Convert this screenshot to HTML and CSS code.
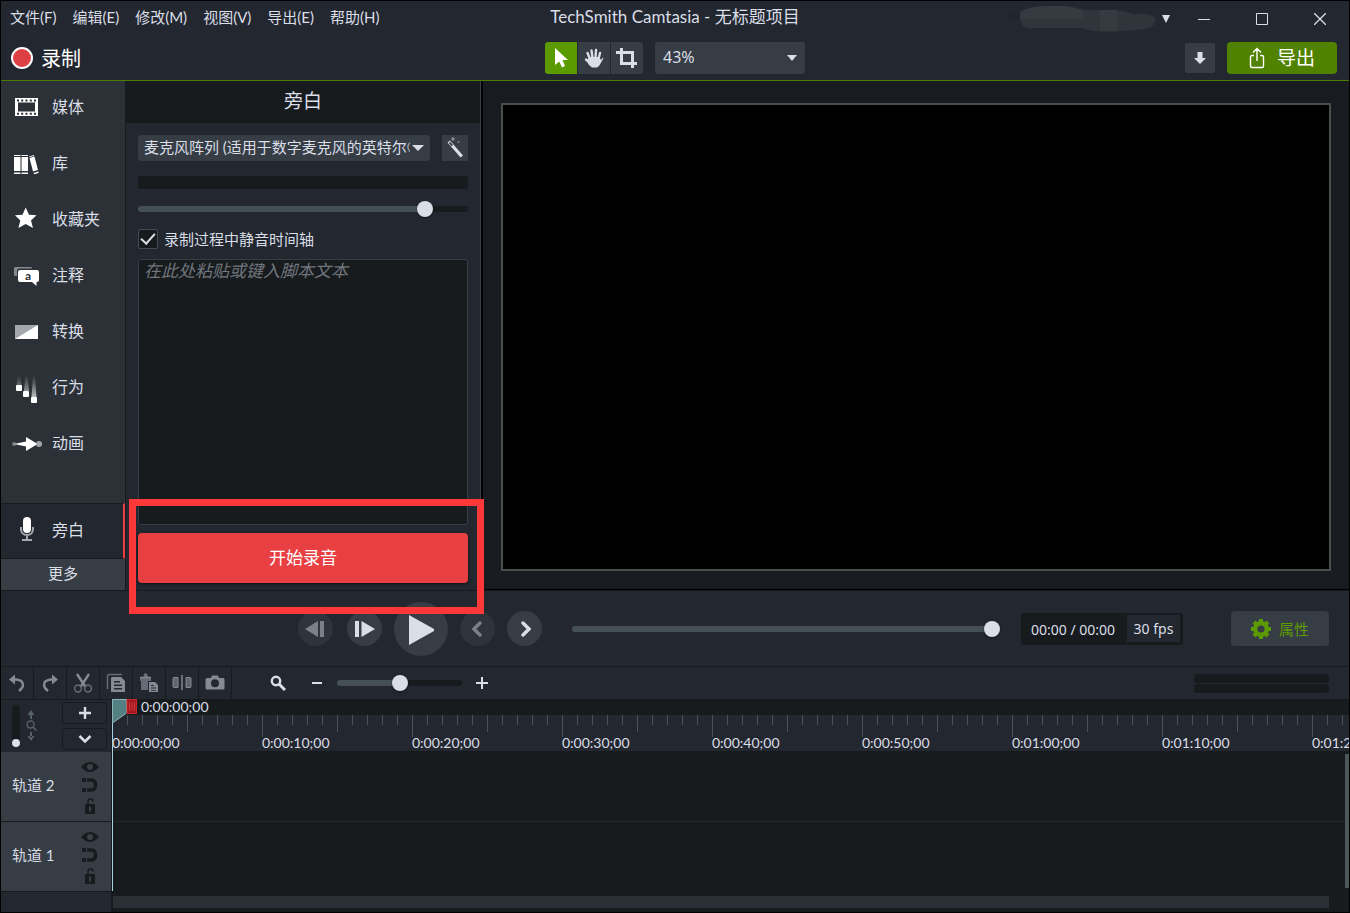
FILE: index.html
```html
<!DOCTYPE html>
<html lang="zh-CN">
<head>
    <meta charset="UTF-8">
    <meta name="viewport" content="width=device-width, initial-scale=1.0">
    <title>TechSmith Camtasia - 无标题项目</title>
    <link rel="stylesheet" href="styles.css">
</head>

<body>

<header>
  <div class="title-bar">
    <nav class="menu">
      <button>文件(F)</button>
      <button>编辑(E)</button>
      <button>修改(M)</button>
      <button>视图(V)</button>
      <button>导出(E)</button>
      <button>帮助(H)</button>
    </nav>
    <h1>TechSmith Camtasia - 无标题项目</h1>
    <div class="window-controls">
      <svg class="account" width="152" height="28" viewBox="0 0 152 28">
        <path d="M0 9Q8 6 16 7V17Q6 15 0 11z" fill="#22262c"/>
        <path d="M15 7Q25 1 42 1H60Q72 3 78 5H108Q122 6 128 9Q146 8 150 13Q152 22 138 24Q110 28 88 26L76 23H22Q15 20 15 14z" fill="#30353b"/>
        <path d="M15 7Q25 1 42 1H60Q72 3 78 5V14H15zM95 5H112V26H95z" fill="#363a41"/>
      </svg>
      <button class="account-menu" aria-label="账户"><svg width="8" height="8" viewBox="0 0 8 8"><path d="M0 0h8L4 8z" fill="#dadee7"/></svg></button>
      <button class="window-btn" aria-label="最小化"><svg width="12" height="12" viewBox="0 0 12 12"><path d="M0 6.5h12" stroke="#dadee7"/></svg></button>
      <button class="window-btn" aria-label="最大化"><svg width="12" height="12" viewBox="0 0 12 12"><path d="M.5.5h11v11H.5z" fill="none" stroke="#dadee7"/></svg></button>
      <button class="window-btn" aria-label="关闭"><svg width="12" height="12" viewBox="0 0 12 12"><path d="M0 0l12 12M12 0L0 12" stroke="#dadee7" stroke-width="1.3"/></svg></button>
    </div>
  </div>

  <div class="main-toolbar">
    <button class="record-btn"><span class="record-dot"></span>录制</button>
    <div class="canvas-tools">
      <div class="tool-group">
        <button class="tool active" aria-label="选择"><svg width="16" height="20" viewBox="0 0 16 20"><path d="M2 0L15 12H9.500L12 18L9 19.500L6.300 13.400L2 17z" fill="#fff"/></svg></button>
        <button class="tool" aria-label="平移"><svg width="20" height="20" viewBox="0 0 20 20"><path d="M6 11L3.500 5M8.500 10L7.500 2.500M11.500 10L12 2M14.500 11L16 5M6 15L2 11.500" fill="none" stroke="#dadee7" stroke-width="2.400" stroke-linecap="round"/><path d="M5 9L15.500 9L17 12L19 9.500Q20 10 18 13L15 18L13 19.500H8L5 17L3 13z" fill="#dadee7"/></svg></button>
        <button class="tool" aria-label="裁剪"><svg width="22" height="20" viewBox="0 0 22 20"><path d="M0 4.500H16.500V20M5.500 0V15.500H21" fill="none" stroke="#dadee7" stroke-width="3"/></svg></button>
      </div>
      <div class="select-wrap zoom-select">
        <select aria-label="缩放"><option>43%</option></select>
      </div>
    </div>
    <div class="share-tools">
      <button class="download-btn" aria-label="下载"><svg width="12" height="12" viewBox="0 0 12 12"><path d="M3.500 0h5v6H12L6 12L0 6h3.500z" fill="#dadee7"/></svg></button>
      <button class="export-btn"><svg width="16" height="22" viewBox="0 0 16 22"><path d="M5 8.500H3Q1.500 8.500 1.500 10V19Q1.500 20.500 3 20.500H13Q14.500 20.500 14.500 19V10Q14.500 8.500 13 8.500H11M8 14V2M4 5.500L8 1.500L12 5.500" fill="none" stroke="#fff" stroke-width="1.400"/></svg>导出</button>
    </div>
  </div>
</header>

<main>
  <aside class="sidebar">
    <div class="tabs">
      <button class="tab"><svg width="32" height="32" viewBox="0 0 32 32"><path fill-rule="evenodd" d="M4 7h23v18H4zM7 11.500h17v9H7zM6 8.500v2h2v-2zM10.200 8.500v2h2v-2zM14.500 8.500v2h2v-2zM18.800 8.500v2h2v-2zM23 8.500v2h2v-2zM6 21.800v2h2v-2zM10.200 21.800v2h2v-2zM14.500 21.800v2h2v-2zM18.800 21.800v2h2v-2zM23 21.800v2h2v-2z" fill="#fff"/></svg>媒体</button>
      <button class="tab"><svg width="32" height="32" viewBox="0 0 32 32"><path d="M3 10h6.500v14H3zM10.500 10H17v14h-6.500zM18.500 11L23.500 9.500L27 23L22 24.500zM3 8h6.500v1H3zM10.500 8H17v1h-6.500zM18 9.500L23 8V9L18.300 10.300zM3 25.500h6.500V27H3zM10.500 25.500H17V27h-6.500zM22.500 26L27.500 24.500V26L23 27.200z" fill="#fff"/></svg>库</button>
      <button class="tab"><svg width="32" height="32" viewBox="0 0 32 32"><path d="M14.700 4.500L18 11.700L25.500 12.300L20 17.600L22 25L14.700 21L7.400 25L9.300 17.600L4 12.300L11.500 11.700z" fill="#fff"/></svg>收藏夹</button>
      <button class="tab"><svg width="32" height="32" viewBox="0 0 32 32"><path d="M4.500 17Q3 17 3 15.500V9.500Q3 8 4.500 8H20Q21 8 21 9.500H8Q6 9.500 6 11.500V17z" fill="#858a90"/><path d="M9 11H26Q28 11 28 13V21Q28 23 26 23H25.500V27L21 23H9Q7 23 7 21V13Q7 11 9 11z" fill="#fff"/><text x="17" y="21" text-anchor="middle" class="bubble-letter">a</text></svg>注释</button>
      <button class="tab"><svg width="32" height="32" viewBox="0 0 32 32"><path d="M4 10h23v14H4z" fill="#a4a8ac"/><path d="M27 10V24H4z" fill="#fff"/></svg>转换</button>
      <button class="tab"><svg width="32" height="32" viewBox="0 0 32 32"><defs><linearGradient id="trail" x1="0" y1="0" x2="0" y2="1"><stop offset="0" stop-color="#9da1a5" stop-opacity="0"/><stop offset="1" stop-color="#b8bbbf"/></linearGradient></defs><path d="M7 4H9L10.500 14H5.500zM14.500 4H16.500L18 20H13zM22 4H24L25.500 26H20.500z" fill="url(#trail)"/><rect x="5" y="14" width="6" height="6" rx="1" fill="#fff"/><rect x="12" y="20" width="6" height="6" rx="1" fill="#fff"/><rect x="20" y="26" width="6" height="6" rx="1" fill="#fff"/></svg>行为</button>
      <button class="tab"><svg width="32" height="32" viewBox="0 0 32 32"><circle cx="3" cy="17" r="2" fill="#777c81"/><circle cx="28" cy="17" r="3" fill="#a4a8ac"/><path d="M3 17L15 14.500V10L25 16Q26 17 25 18L15 24V19.500z" fill="#fff"/></svg>动画</button>
    </div>
    <button class="tab selected"><svg width="32" height="32" viewBox="0 0 32 32"><rect x="12" y="3" width="8" height="16" rx="4" fill="#fff"/><path d="M10 13V15.500Q10.500 21 16 21Q21.500 21 22 15.500V13M16 21V26M11 26H21" fill="none" stroke="#a4a8ac" stroke-width="2"/></svg>旁白</button>
    <button class="more-btn">更多</button>
  </aside>

  <section class="panel">
    <h2>旁白</h2>
    <div class="panel-body">
      <div class="mic-row">
        <div class="select-wrap mic-select">
          <select aria-label="麦克风"><option>麦克风阵列 (适用于数字麦克风的英特尔® 智音技术)</option></select>
        </div>
        <button class="wand-btn" aria-label="麦克风向导"><svg width="20" height="22" viewBox="0 0 20 22"><path d="M2.500 5.500L5 3.500L18 18.500L15.500 20.500z" fill="#dadee7"/><path d="M3.800 6L5.200 4.800L8 8L6.600 9.200z" fill="#3a4149"/><circle cx="8" cy="2" r="1.700" fill="#858b94"/><circle cx="13.500" cy="5" r="1.200" fill="#6d737c"/></svg></button>
      </div>
      <div class="level-meter"></div>
      <input class="slider" type="range" min="0" max="100" value="89" style="--value: 89%" aria-label="输入音量">
      <label class="mute-option"><input type="checkbox" checked>录制过程中静音时间轴</label>
      <textarea placeholder="在此处粘贴或键入脚本文本" aria-label="脚本"></textarea>
      <button class="start-btn">开始录音</button>
    </div>
    <div class="highlight"></div>
  </section>

  <section class="canvas">
    <div class="stage"></div>
  </section>
</main>

<section class="playback">
  <div class="transport">
    <button class="round dim" aria-label="上一帧"><svg width="22" height="16" viewBox="0 0 22 16"><path d="M13 0V16L0 8zM15 0h4v16h-4z" fill="#dadee7"/></svg></button>
    <button class="round" aria-label="下一帧"><svg width="20" height="16" viewBox="0 0 20 16"><path d="M6.500 0V16L20 8zM0 0h4v16H0z" fill="#dadee7"/></svg></button>
    <button class="round play" aria-label="播放"><svg width="26" height="32" viewBox="0 0 26 32"><path d="M1 1L28 16L1 31z" fill="#dadee7" transform="translate(0 1)"/></svg></button>
    <button class="round dim" aria-label="上一个标记"><svg width="12" height="16" viewBox="0 0 12 16"><path d="M8 2L2 8L8 14" fill="none" stroke="#dadee7" stroke-width="3.400" stroke-linecap="round"/></svg></button>
    <button class="round" aria-label="下一个标记"><svg width="12" height="16" viewBox="0 0 12 16"><path d="M4 2L10 8L4 14" fill="none" stroke="#dadee7" stroke-width="3.400" stroke-linecap="round"/></svg></button>
  </div>
  <input class="slider scrubber" type="range" min="0" max="100" value="100" style="--value: 100%" aria-label="播放进度">
  <div class="time-box">
    <span class="time">00:00 / 00:00</span>
    <span class="fps">30 fps</span>
  </div>
  <button class="properties-btn"><svg width="20" height="20" viewBox="0 0 20 20"><circle cx="10" cy="10" r="5.800" fill="none" stroke="#5b9a00" stroke-width="4.400"/><path d="M10 0V3M10 17V20M0 10H3M17 10H20M3 3L5 5M15 15L17 17M3 17L5 15M15 5L17 3" stroke="#5b9a00" stroke-width="4"/></svg>属性</button>
</section>

<section class="edit-toolbar">
  <div class="edit-buttons">
    <button aria-label="撤消"><svg width="20" height="20" viewBox="0 0 20 20"><path d="M4 6.500H9Q16 7 16 12Q16 15 12 18" fill="none" stroke="#858b94" stroke-width="2.400"/><path d="M2 6.500L8 1.500V11.500z" fill="#858b94"/></svg></button>
    <button aria-label="恢复"><svg width="20" height="20" viewBox="0 0 20 20"><path d="M16 6.500H11Q4 7 4 12Q4 15 8 18" fill="none" stroke="#858b94" stroke-width="2.400"/><path d="M18 6.500L12 1.500V11.500z" fill="#858b94"/></svg></button>
    <button aria-label="剪切"><svg width="20" height="20" viewBox="0 0 20 20"><path d="M4 1L12.500 14M16 1L7.500 14" stroke="#858b94" stroke-width="2.400"/><circle cx="5" cy="15.500" r="3.400" fill="none" stroke="#666c75" stroke-width="1.500"/><circle cx="15" cy="15.500" r="3.400" fill="none" stroke="#666c75" stroke-width="1.500"/></svg></button>
    <button aria-label="复制"><svg width="20" height="20" viewBox="0 0 20 20"><path d="M1.500 16V3Q1.500 1.500 3 1.500H16" fill="none" stroke="#666c75" stroke-width="1.500"/><path fill-rule="evenodd" d="M6 4H15L19 8V19H5V5zM8 8v1.500h6V8zM8 11.500V13h8v-1.500zM8 15v1.500h8V15z" fill="#858b94"/></svg></button>
    <button aria-label="粘贴"><svg width="20" height="20" viewBox="0 0 20 20"><path d="M1 4H4.500Q5 0 6.500 0Q8.500 0 9 4H12V8H9V17H2V8H1z" fill="#666c75"/><path d="M1 4.500H12" stroke="#858b94" stroke-width="1.500"/><path fill-rule="evenodd" d="M10 9H16L19 12V19H10zM12 12v1h3v-1zM12 14.500v1h5v-1zM12 17v.8h5V17z" fill="#858b94"/></svg></button>
    <button aria-label="拆分"><svg width="20" height="20" viewBox="0 0 20 20"><path d="M2 4.500H6V14.500H2Q1 14.500 1 13.500V5.500Q1 4.500 2 4.500zM14 4.500H18Q19 4.500 19 5.500V13.500Q19 14.500 18 14.500H14z" fill="#5f656e" stroke="#858b94"/><path d="M10 2V17" stroke="#858b94" stroke-width="1.500"/></svg></button>
    <button aria-label="快照"><svg width="20" height="20" viewBox="0 0 20 20"><path fill-rule="evenodd" d="M2 5H6L7 2.500H13L14 5H18Q19.500 5 19.500 6.500V15Q19.500 16.500 18 16.500H2Q.5 16.500 .5 15V6.500Q.5 5 2 5zM10 6.300A4 4 0 1 0 10 14.300A4 4 0 1 0 10 6.300z" fill="#858b94"/></svg></button>
  </div>
  <div class="zoom-controls">
    <svg class="search-icon" width="16" height="16" viewBox="0 0 16 16"><circle cx="6" cy="6" r="4.200" fill="none" stroke="#dadee7" stroke-width="2.400"/><path d="M9 9L15 15" stroke="#dadee7" stroke-width="3"/></svg>
    <button aria-label="缩小"><svg width="12" height="12" viewBox="0 0 12 12"><path d="M1 6h10" stroke="#dadee7" stroke-width="2"/></svg></button>
    <input class="slider zoom-slider" type="range" min="0" max="100" value="50" style="--value: 50%" aria-label="时间轴缩放">
    <button aria-label="放大"><svg width="12" height="12" viewBox="0 0 12 12"><path d="M0 6h12M6 0v12" stroke="#dadee7" stroke-width="2"/></svg></button>
  </div>
  <div class="audio-meters"><span></span><span></span></div>
</section>

<section class="timeline">
  <div class="track-heads">
    <div class="track-tools">
      <div class="height-slider"><span></span></div>
      <svg class="height-icon" width="12" height="32" viewBox="0 0 12 32"><path d="M5 0L8.500 5H1.500zM4 4h2v5H4zM5 31L8.500 26H1.500zM4 22h2v5H4z" fill="#566168"/><circle cx="4.500" cy="14.500" r="3.500" fill="none" stroke="#566168" stroke-width="1.400"/><path d="M7 17L10.500 20.500" stroke="#566168" stroke-width="1.600"/></svg>
      <div class="track-buttons">
        <button aria-label="添加轨道"><svg width="12" height="12" viewBox="0 0 12 12"><path d="M0 6h12M6 0v12" stroke="#dadee7" stroke-width="2.400"/></svg></button>
        <button aria-label="展开轨道"><svg width="14" height="10" viewBox="0 0 14 10"><path d="M1.500 2L7 7.500L12.500 2" fill="none" stroke="#dadee7" stroke-width="2.600"/></svg></button>
      </div>
    </div>
    <div class="track-head">
      <span>轨道 2</span>
      <div class="track-icons">
        <svg width="18" height="10" viewBox="0 0 18 10"><path d="M0 5Q9-5 18 5Q9 15 0 5z" fill="#171b1e"/><circle cx="9" cy="5" r="3" fill="#394149"/></svg>
        <svg width="16" height="14" viewBox="0 0 16 14"><path d="M5 2H9Q13.500 2 13.500 7T9 12H5" fill="none" stroke="#171b1e" stroke-width="3.600"/><path d="M0 0h4v4H0zM0 10h4v4H0z" fill="#171b1e"/></svg>
        <svg width="12" height="16" viewBox="0 0 12 16"><path d="M4 6V3.500Q4 1 6.500 1T9 3.500" fill="none" stroke="#171b1e" stroke-width="1.500"/><path d="M1 6h10v10H1z" fill="#171b1e"/><path d="M5 8.500h2v5H5z" fill="#394149"/></svg>
      </div>
    </div>
    <div class="track-head">
      <span>轨道 1</span>
      <div class="track-icons">
        <svg width="18" height="10" viewBox="0 0 18 10"><path d="M0 5Q9-5 18 5Q9 15 0 5z" fill="#171b1e"/><circle cx="9" cy="5" r="3" fill="#394149"/></svg>
        <svg width="16" height="14" viewBox="0 0 16 14"><path d="M5 2H9Q13.500 2 13.500 7T9 12H5" fill="none" stroke="#171b1e" stroke-width="3.600"/><path d="M0 0h4v4H0zM0 10h4v4H0z" fill="#171b1e"/></svg>
        <svg width="12" height="16" viewBox="0 0 12 16"><path d="M4 6V3.500Q4 1 6.500 1T9 3.500" fill="none" stroke="#171b1e" stroke-width="1.500"/><path d="M1 6h10v10H1z" fill="#171b1e"/><path d="M5 8.500h2v5H5z" fill="#394149"/></svg>
      </div>
    </div>
  </div>

  <div class="track-area">
    <div class="playhead-time">0:00:00;00</div>
    <div class="ruler">
      <span>0:00:00;00</span>
      <span>0:00:10;00</span>
      <span>0:00:20;00</span>
      <span>0:00:30;00</span>
      <span>0:00:40;00</span>
      <span>0:00:50;00</span>
      <span>0:01:00;00</span>
      <span>0:01:10;00</span>
      <span>0:01:20;00</span>
    </div>
    <div class="lanes">
      <div class="lane"></div>
      <div class="lane"></div>
      <div class="scroll-y"></div>
    </div>
    <div class="scroll-x"></div>
    <div class="playhead">
      <svg width="26" height="25" viewBox="0 0 26 25"><path d="M.5.5H14.500V14L.5 24z" fill="#528083" stroke="#8db5b8"/><path d="M15 .5H24.500V14.500H15z" fill="#a3191f" stroke="#c8262c"/><path d="M17.500 3.500v8M20 3.500v8M22.500 3.500v8" stroke="#d43a40"/></svg>
    </div>
  </div>
</section>

</body>
</html>
```

FILE: styles.css
```css
* {
    box-sizing: border-box;
}

body {
    display: flex;
    flex-direction: column;
    min-height: 100vh;
    margin: 0;
    border: 1px solid #000;
    background-color: #23272f;
    color: #dadee7;
    font-family: Lato, "Noto Sans CJK SC", sans-serif;
    font-size: 15px;
    line-height: 20px;
    overflow-x: hidden;
}

h1, h2 {
    margin: 0;
    font-weight: normal;
}

button, select, textarea, input {
    margin: 0;
    font-family: inherit;
    font-size: inherit;
    color: inherit;
}

button {
    display: flex;
    align-items: center;
    justify-content: center;
    padding: 0;
    border: none;
    background: none;
    cursor: pointer;
    line-height: 20px;
}

svg {
    display: block;
    flex: none;
}

/* title bar */
header {
    border-bottom: 1px solid #4a7d00;
}

.title-bar, .main-toolbar {
    display: grid;
    grid-template-columns: 1fr auto 1fr;
    align-items: center;
}

.title-bar {
    height: 35px;
}

.menu {
    display: flex;
    gap: 16px;
    padding: 0 0 3px 9px;
}

.title-bar h1 {
    padding-bottom: 3px;
    font-size: 17px;
}

.window-controls {
    display: flex;
    justify-content: flex-end;
    align-items: center;
}

.account-menu {
    width: 18px;
    height: 35px;
}

.window-btn {
    width: 58px;
    height: 35px;
}

/* main toolbar */
.main-toolbar {
    height: 44px;
}

.record-btn {
    justify-self: start;
    gap: 8px;
    padding-left: 10px;
    font-size: 20px;
    color: #fff;
}

.record-dot {
    width: 22px;
    height: 22px;
    border: 2px solid #fff;
    border-radius: 50%;
    background-color: #dc4043;
}

.canvas-tools, .share-tools {
    display: flex;
    align-items: center;
    gap: 12px;
}

.tool-group {
    display: flex;
    gap: 1px;
    border-radius: 3px;
    overflow: hidden;
}

.tool {
    width: 32px;
    height: 32px;
    background-color: #363d45;
}

.tool.active {
    background-color: #5b9a00;
}

.select-wrap {
    position: relative;
}

.select-wrap::after {
    content: "";
    position: absolute;
    top: 50%;
    right: 8px;
    margin-top: -3px;
    border: 5px solid transparent;
    border-top: 6px solid #dadee7;
    border-bottom: none;
    pointer-events: none;
}

.select-wrap select {
    appearance: none;
    width: 100%;
    height: 100%;
    border: none;
    border-radius: 3px;
    background-color: #363d45;
}

.zoom-select {
    width: 150px;
    height: 32px;
}

.zoom-select select {
    padding: 0 24px 2px 8px;
    font-family: "Noto Sans", sans-serif;
    font-size: 16px;
}

.share-tools {
    justify-content: flex-end;
    padding-right: 12px;
}

.download-btn {
    width: 30px;
    height: 30px;
    border-radius: 2px;
    background-color: #363d45;
}

.export-btn {
    gap: 12px;
    width: 110px;
    height: 32px;
    border-radius: 4px;
    background-color: #508200;
    color: #fff;
    font-size: 19px;
}

/* workspace */
main {
    display: flex;
    flex: 1;
    min-height: 509px;
}

.sidebar {
    display: flex;
    flex-direction: column;
    width: 125px;
    border-right: 1px solid #171b1e;
    background-color: #2b3137;
}

.tabs {
    display: flex;
    flex: 1;
    flex-direction: column;
    gap: 4px;
}

.tab {
    justify-content: flex-start;
    gap: 9px;
    width: 100%;
    height: 52px;
    padding-left: 10px;
    font-size: 16px;
}

.bubble-letter {
    font-family: Lato, sans-serif;
    font-size: 12px;
    font-weight: bold;
    fill: #2b3137;
}

.tab.selected {
    height: 56px;
    padding-bottom: 3px;
    border-top: 1px solid #171b1e;
    border-bottom: 1px solid #171b1e;
    border-right: 2px solid #e84042;
    background-color: #23272f;
}

.more-btn {
    height: 31px;
    padding-bottom: 3px;
    background-color: #363d45;
}

.panel {
    position: relative;
    display: flex;
    flex-direction: column;
    width: 355px;
    border-right: 1px solid #3a4047;
}

.panel h2 {
    padding: 10px 0 12px;
    background-color: #171b1e;
    font-size: 19px;
    text-align: center;
}

.panel-body {
    display: flex;
    flex: 1;
    flex-direction: column;
    padding: 12px 12px 7px;
}

.mic-row {
    display: flex;
    gap: 12px;
}

.mic-select {
    flex: 1;
    min-width: 0;
    height: 26px;
}

.mic-select::after {
    right: 6px;
    border-width: 6px 6px 0;
}

.mic-select select {
    padding: 0 20px 2px 6px;
    overflow: hidden;
}

.wand-btn {
    width: 26px;
    height: 26px;
    background-color: #363d45;
}

.level-meter {
    height: 13px;
    margin: 15px 0 12px;
    border-radius: 3px;
    background-color: #171b1e;
}

.slider {
    appearance: none;
    width: 100%;
    height: 16px;
    background: none;
}

.slider::-webkit-slider-runnable-track {
    height: 6px;
    border-radius: 3px;
    background: linear-gradient(to right, #455056 var(--value), #171b1e var(--value));
}

.slider::-webkit-slider-thumb {
    appearance: none;
    width: 16px;
    height: 16px;
    margin-top: -5px;
    border-radius: 50%;
    background-color: #dadee7;
    box-shadow: 0 1px 2px rgba(0, 0, 0, 0.5);
}

.mute-option {
    display: flex;
    align-items: center;
    gap: 6px;
    height: 20px;
    margin: 12px 0 10px;
    line-height: 18px;
}

.mute-option input {
    appearance: none;
    display: flex;
    justify-content: center;
    width: 20px;
    height: 20px;
    border: 1px solid #454b53;
    border-radius: 2px;
    background-color: #171b1e;
}

.mute-option input:checked::after {
    content: "";
    width: 6px;
    height: 12px;
    border: solid #dadee7;
    border-width: 0 2px 2px 0;
    transform: rotate(42deg);
}

textarea {
    display: block;
    flex: 1;
    width: 100%;
    padding: 0 5px;
    border: 1px solid #363d45;
    border-radius: 3px;
    background-color: #171b1e;
    resize: none;
}

.panel textarea {
    font-size: 17px;
    line-height: 22px;
}

textarea::placeholder {
    color: #70767c;
    font-style: italic;
}

.start-btn {
    height: 50px;
    margin-top: 8px;
    border-radius: 4px;
    background-color: #e84042;
    box-shadow: 0 1px 3px rgba(0, 0, 0, 0.6);
    color: #fff;
    font-size: 17px;
}

/* callout frame around the start button */
.highlight {
    position: absolute;
    z-index: 2;
    left: 3px;
    right: -4px;
    bottom: -24px;
    height: 115px;
    border: 7px solid #fd3838;
    pointer-events: none;
}

.canvas {
    display: flex;
    flex: 1;
    padding: 22px 18px 18px;
    border-left: 2px solid #000;
    border-bottom: 1px solid #000;
    background-color: #181c20;
}

.stage {
    flex: 1;
    border: 2px solid #4c4c4c;
    background-color: #000;
}

/* playback */
.playback {
    display: flex;
    align-items: center;
    height: 76px;
    padding: 0 20px 0 297px;
    border-top: 1px solid #171b1e;
}

.transport {
    display: flex;
    align-items: center;
    gap: 12px;
}

.round {
    width: 35px;
    height: 35px;
    border-radius: 50%;
    background-color: #363d45;
}

.round:first-child {
    margin-right: 2px;
}

.round.play {
    width: 54px;
    height: 54px;
}

.round.dim {
    background-color: #2e343c;
}

.round.dim svg {
    opacity: 0.45;
}

.scrubber {
    flex: 1;
    min-width: 80px;
    margin: 0 21px 0 30px;
}

.time-box {
    display: flex;
    align-items: center;
    height: 32px;
    padding: 0 3px 0 10px;
    border-radius: 2px;
    background-color: #171b1e;
    font-family: "Noto Sans", sans-serif;
    font-size: 14px;
}

.time {
    width: 96px;
    padding-top: 3px;
    white-space: nowrap;
}

.fps {
    width: 53px;
    padding: 4px 0 3px;
    background-color: #23272f;
    text-align: center;
}

.properties-btn {
    gap: 8px;
    width: 98px;
    height: 35px;
    margin-left: 48px;
    border-radius: 4px;
    background-color: #363d45;
    color: #5b9a00;
}

/* edit toolbar */
.edit-toolbar {
    display: flex;
    align-items: center;
    height: 33px;
    padding-right: 20px;
    border-top: 1px solid #171b1e;
}

.edit-buttons {
    display: flex;
}

.edit-buttons button {
    width: 33px;
    height: 32px;
    border-right: 1px solid #171b1e;
}

.zoom-controls {
    display: flex;
    align-items: center;
    gap: 14px;
    margin-left: 38px;
}

.search-icon {
    margin-right: 11px;
}

.zoom-slider {
    width: 125px;
}

.audio-meters {
    display: grid;
    gap: 1px;
    width: 135px;
    margin-left: auto;
}

.audio-meters span {
    height: 9px;
    border-radius: 3px;
    background-color: #171b1e;
}

/* timeline */
.timeline {
    display: flex;
    height: 213px;
}

.track-heads {
    width: 111px;
    border-right: 1px solid #171b1e;
}

.track-tools {
    display: flex;
    align-items: center;
    height: 53px;
    padding: 0 4px 0 11px;
    border-top: 1px solid #171b1e;
}

.height-slider {
    display: flex;
    align-items: flex-end;
    width: 8px;
    height: 42px;
    border-radius: 4px;
    background-color: #171b1e;
}

.height-slider span {
    width: 8px;
    height: 8px;
    border-radius: 50%;
    background-color: #dadee7;
}

.height-icon {
    margin-left: 6px;
}

.track-buttons {
    display: grid;
    gap: 4px;
    width: 45px;
    margin-left: auto;
}

.track-buttons button {
    height: 22px;
    border: 1px solid #171b1e;
    border-radius: 3px;
}

.track-head {
    display: flex;
    align-items: center;
    justify-content: space-between;
    height: 70px;
    padding: 0 12px 0 11px;
    border-bottom: 1px solid #171b1e;
    background-color: #363d45;
}

.track-head > span {
    padding-bottom: 3px;
}

.track-icons {
    display: flex;
    flex-direction: column;
    align-items: center;
    gap: 6px;
    padding-top: 2px;
}

.track-area {
    position: relative;
    flex: 1;
    min-width: 0;
    background-color: #171b1e;
}

.playhead-time {
    height: 16px;
    padding-left: 29px;
    font-size: 14px;
    line-height: 16px;
}

.ruler {
    display: flex;
    height: 36px;
    padding-top: 18px;
    overflow: hidden;
    background-color: #23272f;
    background-image:
        linear-gradient(to right, #48525a 1px, transparent 1px),
        linear-gradient(to right, #48525a 1px, transparent 1px),
        linear-gradient(to right, #48525a 1px, transparent 1px);
    background-size: 150px 22px, 75px 17px, 15px 10px;
    background-repeat: repeat-x;
    font-size: 14px;
}

.ruler span {
    flex: none;
    width: 150px;
}

.lanes {
    position: relative;
    padding-top: 1px;
}

.lane {
    height: 70px;
}

.lane:first-child {
    border-bottom: 1px solid #23272b;
}

.scroll-y {
    position: absolute;
    top: 3px;
    right: 0;
    width: 4px;
    height: 134px;
    background-color: #4c585c;
}

.scroll-x {
    height: 12px;
    margin: 4px 20px 0 1px;
    background-color: #2b3036;
}

.playhead {
    position: absolute;
    top: 0;
    left: 0;
    height: 192px;
    border-left: 1px solid #a9cede;
}

.playhead svg {
    margin-left: -1px;
}
```
